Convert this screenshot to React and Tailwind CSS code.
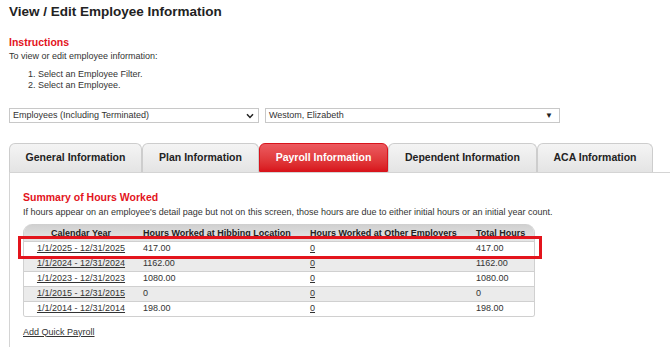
import React from 'react'

const tabs = [
  { label: 'General Information', w: 'w-[133px]' },
  { label: 'Plan Information', w: 'w-[117px]' },
  { label: 'Payroll Information', w: 'w-[129px]', active: true },
  { label: 'Dependent Information', w: 'w-[149px]' },
  { label: 'ACA Information', w: 'w-[116px]' },
]

const rows = [
  { year: '1/1/2025 - 12/31/2025', hib: '417.00', other: '0', total: '417.00' },
  { year: '1/1/2024 - 12/31/2024', hib: '1162.00', other: '0', total: '1162.00' },
  { year: '1/1/2023 - 12/31/2023', hib: '1080.00', other: '0', total: '1080.00' },
  { year: '1/1/2015 - 12/31/2015', hib: '0', other: '0', total: '0' },
  { year: '1/1/2014 - 12/31/2014', hib: '198.00', other: '0', total: '198.00' },
]

const cols = 'grid grid-cols-[114px_167px_166px_65px]'

export default function App() {
  return (
    <div className="w-[670px] h-[347px] overflow-hidden bg-white text-[#333] pl-[9px] font-['Liberation_Sans',Arial,sans-serif]">
      <h1 className="pt-[4px] text-[13.5px] leading-[16px] font-bold text-[#222]">View / Edit Employee Information</h1>

      <h2 className="mt-[16px] text-[10.5px] leading-[12px] font-bold text-[#e3141c]">Instructions</h2>
      <p className="mt-[2.5px] text-[9px] leading-[11px]">To view or edit employee information:</p>
      <ol className="mt-[7px] pl-[19px] text-[9px] leading-[11px]">
        <li>1. Select an Employee Filter.</li>
        <li>2. Select an Employee.</li>
      </ol>

      <div className="mt-[17.5px] flex gap-[6px] text-[9px]">
        <div className="w-[250px] h-[15px] border border-[#c8c8c8] bg-white flex items-center justify-between pl-[3px] pr-[4px]">
          <span>Employees (Including Terminated)</span>
          <svg width="8" height="6" viewBox="0 0 8 6"><path d="M1 1.2 L4 4.4 L7 1.2" fill="none" stroke="#222" strokeWidth="1.5" /></svg>
        </div>
        <div className="w-[295px] h-[15px] border border-[#c8c8c8] bg-white flex items-center justify-between pl-[3px] pr-[6px]">
          <span>Westom, Elizabeth</span>
          <span className="text-[8px] text-[#222]">▼</span>
        </div>
      </div>

      <div className="mt-[20px] flex h-[29px] items-end">
        {tabs.map(t => (
          <div
            key={t.label}
            className={`${t.w} h-[29px] rounded-t-[6px] border flex items-center justify-center text-[10.5px] font-bold ${
              t.active
                ? 'bg-gradient-to-b from-[#ec5a5f] to-[#d8141c] border-[#d8141c] text-white'
                : 'bg-gradient-to-b from-[#f4f4f4] to-[#e4e4e4] border-[#cdcdcd] border-b-0 text-[#222]'
            }`}
          >
            {t.label}
          </div>
        ))}
      </div>

      <div className="border-l border-t border-[#d4d4d4] pl-[13px] pt-[18px] h-[200px]">
        <h3 className="text-[10.5px] leading-[12px] font-bold text-[#e3141c]">Summary of Hours Worked</h3>
        <p className="mt-[3.5px] text-[9px] leading-[11px]">
          If hours appear on an employee's detail page but not on this screen, those hours are due to either initial hours or an initial year count.
        </p>

        <div className="relative mt-[6.5px] w-[512px] text-[9px]">
          <div className="rounded-t-[9px] rounded-b-[3px] border border-t-0 border-[#d0d0d0] overflow-hidden">
            <div className={`${cols} h-[17px] items-end pb-[1px] font-bold text-[#222] bg-gradient-to-b from-[#cfcfcf] to-[#e6e6e6]`}>
              <div className="text-center">Calendar Year</div>
              <div className="pl-[5px]">Hours Worked at Hibbing Location</div>
              <div className="pl-[5px]">Hours Worked at Other Employers</div>
              <div className="pl-[5px]">Total Hours</div>
            </div>
            {rows.map((r, i) => (
              <div
                key={r.year}
                className={`${cols} h-[15px] items-center border-t border-[#d0d0d0] ${i % 2 ? 'bg-[#ebebeb]' : 'bg-white'}`}
              >
                <div className="text-center underline">{r.year}</div>
                <div className="pl-[5px]">{r.hib}</div>
                <div className="pl-[5px] underline">{r.other}</div>
                <div className="pl-[5px]">{r.total}</div>
              </div>
            ))}
          </div>
          <div className="absolute left-[-5px] top-[12px] w-[524px] h-[23px] border-[3px] border-[#e3141c]" />
        </div>

        <a className="block mt-[9.5px] text-[9px] leading-[11px] underline text-[#333]">Add Quick Payroll</a>
      </div>
    </div>
  )
}
